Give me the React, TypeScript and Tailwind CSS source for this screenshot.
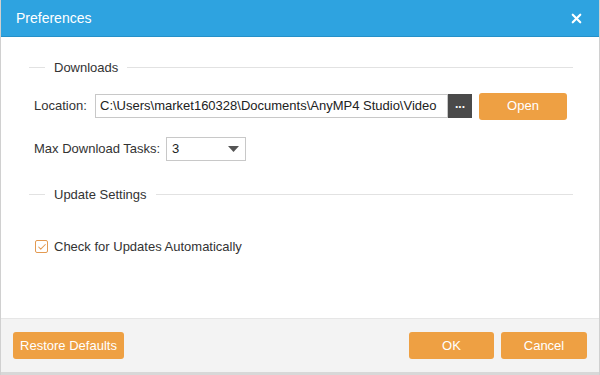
import { Check, X } from "lucide-react";

const orangeBtn =
  "bg-[#eea043] text-white text-[13px] rounded-[3px] h-[27px] flex items-center justify-center";

function SectionTitle({ label }: { label: string }) {
  return (
    <div className="flex items-center">
      <div className="w-[16px] h-px bg-[#e2e2e2] ml-[28px]" />
      <div className="px-[9px] text-[13px] text-[#333]">{label}</div>
      <div className="flex-1 h-px bg-[#e2e2e2] mr-[26px]" />
    </div>
  );
}

export default function App() {
  return (
    <div
      className="w-[600px] h-[375px] flex flex-col bg-white border-x border-[#d0d0d0] overflow-hidden"
      style={{ fontFamily: '"Liberation Sans", Arial, sans-serif' }}
    >
      <div className="h-[37px] bg-[#2ea3e0] border-b border-[#2590c8] flex items-center justify-between pl-[15px] pr-[15px] shrink-0">
        <span className="text-white text-[14px]">Preferences</span>
        <X size={15} strokeWidth={3.5} className="text-white" />
      </div>

      <div className="flex-1 pt-[21px]">
        <SectionTitle label="Downloads" />

        <div className="flex items-center mt-[15px] pl-[33px]">
          <span className="text-[13px] text-[#333] w-[61px]">Location:</span>
          <div className="w-[353px] h-[24px] border border-[#c8c8c8] flex items-center pl-[4px] text-[13px] text-[#222] overflow-hidden whitespace-nowrap">
            C:\Users\market160328\Documents\AnyMP4 Studio\Video
          </div>
          <div className="w-[24px] h-[24px] bg-[#4a4a4a] text-white flex items-center justify-center text-[12px] font-bold leading-none pb-[4px]">
            ...
          </div>
          <div className={`${orangeBtn} w-[88px] ml-[7px] h-[24px]`}>Open</div>
        </div>

        <div className="flex items-center mt-[17px] pl-[33px]">
          <span className="text-[13px] text-[#333] w-[132px]">Max Download Tasks:</span>
          <div className="w-[80px] h-[24px] border border-[#c8c8c8] flex items-center justify-between pl-[5px] pr-[6px] text-[13px] text-[#222]">
            <span>3</span>
            <svg width="11" height="6" viewBox="0 0 11 6">
              <path d="M0 0 L11 0 L5.5 6 Z" fill="#555" />
            </svg>
          </div>
        </div>

        <div className="mt-[24px]">
          <SectionTitle label="Update Settings" />
        </div>

        <div className="flex items-center mt-[33px] pl-[34px]">
          <div className="w-[13px] h-[13px] border border-[#e39a52] rounded-[2px] flex items-center justify-center">
            <Check size={10} strokeWidth={2.5} className="text-[#e39a52]" />
          </div>
          <span className="ml-[6px] text-[13px] text-[#333]">Check for Updates Automatically</span>
        </div>
      </div>

      <div className="h-[57px] bg-[#f3f3f3] border-t border-[#e6e6e6] border-b-[3px] border-b-[#d8d8d8] flex items-center justify-between pl-[12px] pr-[12px] shrink-0">
        <div className={`${orangeBtn} w-[111px]`}>Restore Defaults</div>
        <div className="flex gap-[7px]">
          <div className={`${orangeBtn} w-[85px]`}>OK</div>
          <div className={`${orangeBtn} w-[86px]`}>Cancel</div>
        </div>
      </div>
    </div>
  );
}
